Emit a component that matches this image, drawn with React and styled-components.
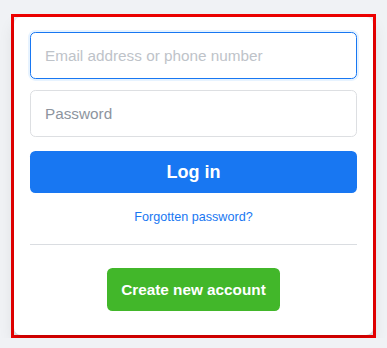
import React from "react";
import styled, { createGlobalStyle } from "styled-components";

const Global = createGlobalStyle`
  html, body {
    margin: 0;
    padding: 0;
    background: #f0f2f5;
    font-family: "Liberation Sans", Arial, Helvetica, sans-serif;
  }
  * { box-sizing: border-box; }
`;

const Page = styled.div`
  padding: 14px 0 0 11px;
`;

const Highlight = styled.div`
  width: fit-content;
  border: 3px solid #ee0000;
`;

const Card = styled.form`
  width: 359px;
  background: #ffffff;
  border-radius: 7px;
  box-shadow: 0 2px 4px rgba(0, 0, 0, 0.1), 0 8px 16px rgba(0, 0, 0, 0.1);
  padding: 15px 16px 24px;
  display: flex;
  flex-direction: column;
`;

const Field = styled.input`
  display: block;
  width: 100%;
  height: 47px;
  margin: 0 0 ${(p) => p.$gap}px;
  padding: 0 14px;
  font-family: inherit;
  font-size: 15.3px;
  color: #1c1e21;
  background: #ffffff;
  border: 1px solid ${(p) => (p.$focused ? "#1877f2" : "#dddfe2")};
  box-shadow: ${(p) => (p.$focused ? "0 0 0 2px #e7f3ff" : "none")};
  border-radius: 5.4px;
  outline: none;
  &::placeholder {
    color: ${(p) => (p.$focused ? "#bec3c9" : "#8d949e")};
  }
`;

const LoginButton = styled.button`
  height: 42px;
  width: 100%;
  border: none;
  border-radius: 5.4px;
  background: #1877f2;
  color: #ffffff;
  font-family: inherit;
  font-size: 18px;
  font-weight: bold;
  cursor: pointer;
`;

const Forgot = styled.a`
  display: block;
  margin-top: 17px;
  text-align: center;
  font-size: 12.6px;
  line-height: 15px;
  color: #1877f2;
  text-decoration: none;
`;

const Divider = styled.div`
  margin-top: 19px;
  border-bottom: 1px solid #dadde1;
`;

const CreateRow = styled.div`
  display: flex;
  justify-content: center;
  margin-top: 23px;
`;

const CreateButton = styled.button`
  height: 43px;
  padding: 0 14.5px;
  border: none;
  border-radius: 5.4px;
  background: #42b72a;
  color: #ffffff;
  font-family: inherit;
  font-size: 15.3px;
  font-weight: bold;
  cursor: pointer;
`;

export default function App() {
  return (
    <>
      <Global />
      <Page>
        <Highlight>
          <Card onSubmit={(e) => e.preventDefault()}>
            <Field
              type="text"
              placeholder="Email address or phone number"
              $focused
              $gap={11}
            />
            <Field type="password" placeholder="Password" $gap={14} />
            <LoginButton type="submit">Log in</LoginButton>
            <Forgot href="#">Forgotten password?</Forgot>
            <Divider />
            <CreateRow>
              <CreateButton type="button">Create new account</CreateButton>
            </CreateRow>
          </Card>
        </Highlight>
      </Page>
    </>
  );
}
